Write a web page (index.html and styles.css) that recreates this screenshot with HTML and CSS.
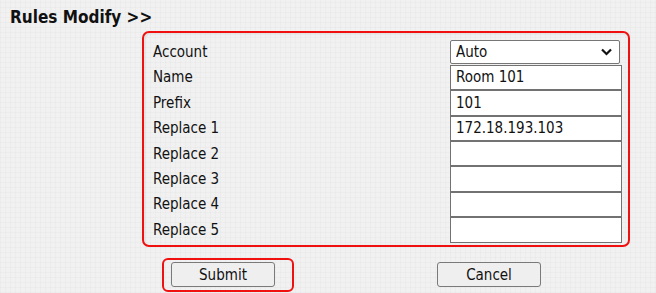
FILE: index.html
```html
<!DOCTYPE html>
<html>
<head>
<meta charset="utf-8">
<link rel="stylesheet" href="styles.css">
</head>
<body>
<h1 class="title">Rules Modify &gt;&gt;</h1>
<div class="panel">
  <div class="row row-first">
    <label class="lbl">Account</label>
    <div class="select-wrap">
      <select class="sel"><option>Auto</option></select>
      <svg class="chev" width="11" height="8" viewBox="0 0 11 8"><path d="M1 1.5 L5.5 6 L10 1.5" fill="none" stroke="#111" stroke-width="2.2"/></svg>
    </div>
  </div>
  <div class="row"><label class="lbl">Name</label><input class="inp" type="text" value="Room 101"></div>
  <div class="row"><label class="lbl">Prefix</label><input class="inp" type="text" value="101"></div>
  <div class="row"><label class="lbl">Replace 1</label><input class="inp" type="text" value="172.18.193.103"></div>
  <div class="row"><label class="lbl">Replace 2</label><input class="inp" type="text" value=""></div>
  <div class="row"><label class="lbl">Replace 3</label><input class="inp" type="text" value=""></div>
  <div class="row"><label class="lbl">Replace 4</label><input class="inp" type="text" value=""></div>
  <div class="row"><label class="lbl">Replace 5</label><input class="inp" type="text" value=""></div>
</div>
<div class="actions">
  <div class="ring"><button class="btn">Submit</button></div>
  <button class="btn btn-cancel">Cancel</button>
</div>
</body>
</html>
```

FILE: styles.css
```css
html, body {
  margin: 0;
  padding: 0;
}
body {
  background-color: #f1f1f1;
  background-image:
    repeating-linear-gradient(0deg, rgba(0,0,0,0.018) 0 1px, transparent 1px 5px),
    repeating-linear-gradient(90deg, rgba(0,0,0,0.018) 0 1px, transparent 1px 5px);
  font-family: "DejaVu Sans Condensed", "DejaVu Sans", sans-serif;
  font-stretch: condensed;
  color: #000;
  width: 656px;
  height: 293px;
  overflow: hidden;
}
.title {
  margin: 6px 0 0 10px;
  font-size: 17px;
  line-height: 22px;
  font-weight: bold;
  color: #111;
}
.panel {
  box-sizing: border-box;
  margin: 3px 0 0 142px;
  width: 488px;
  height: 216px;
  border: 2px solid #f01010;
  border-radius: 7px;
  padding: 7px 6px 3px 9px;
  box-shadow: inset 1px 1px 3px rgba(0,0,0,0.08);
}
.row {
  display: grid;
  grid-template-columns: 1fr 172px;
  align-items: center;
  height: 25.4px;
}
.row-first {
  height: 24.8px;
}
.lbl {
  font-size: 15px;
  line-height: 18px;
  color: #111;
}
.select-wrap {
  position: relative;
  width: 170px;
  height: 24px;
  align-self: start;
}
.sel {
  appearance: none;
  -webkit-appearance: none;
  box-sizing: border-box;
  width: 170px;
  height: 24px;
  margin: 0;
  border: 1px solid #767676;
  border-radius: 2px;
  background: #fff;
  font-family: inherit;
  font-stretch: condensed;
  font-size: 15px;
  color: #111;
  padding: 0 0 0 5px;
  outline: none;
}
.chev {
  position: absolute;
  right: 8px;
  top: 8px;
}
.inp {
  box-sizing: border-box;
  width: 172px;
  height: 25.4px;
  margin: 0;
  border: 1px solid #727272;
  background: #fff;
  font-family: inherit;
  font-stretch: condensed;
  font-size: 15px;
  color: #111;
  padding: 0 5px;
  outline: none;
}
.actions {
  display: flex;
  align-items: flex-start;
  margin: 11px 0 0 162px;
  gap: 143px;
}
.ring {
  box-sizing: border-box;
  width: 132px;
  height: 34px;
  border: 2px solid #f01010;
  border-radius: 6px;
  padding: 2px 0 0 7px;
}
.btn {
  box-sizing: border-box;
  width: 104px;
  height: 25px;
  margin: 0;
  border: 1px solid #7a7a7a;
  border-radius: 3px;
  background: #efefef;
  font-family: inherit;
  font-stretch: condensed;
  font-size: 15px;
  color: #111;
  padding: 0;
}
.btn-cancel {
  margin-top: 4px;
}
```
